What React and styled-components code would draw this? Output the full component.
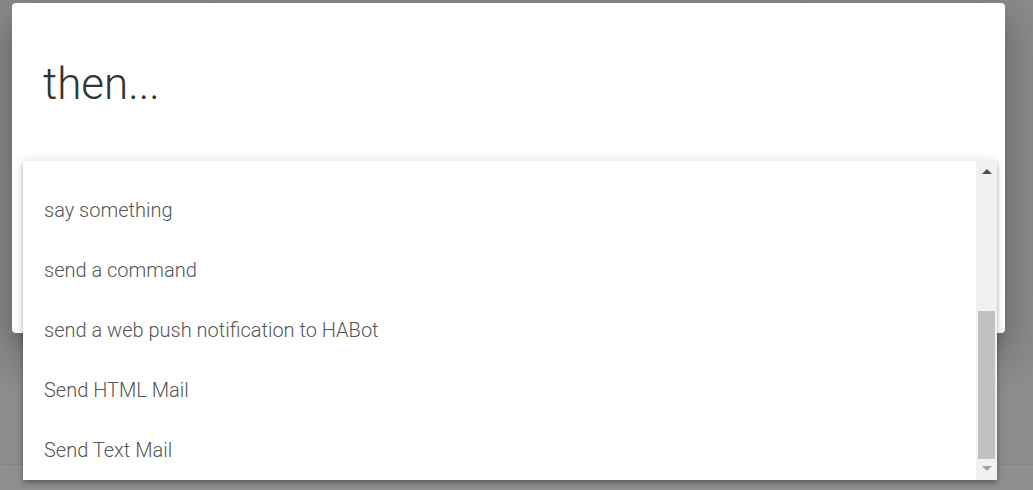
import React from 'react';
import styled, { createGlobalStyle } from 'styled-components';

const GlobalStyle = createGlobalStyle`
  html, body {
    margin: 0;
    padding: 0;
    background: #8c8c8c;
    font-family: Roboto, "Liberation Sans", sans-serif;
    overflow: hidden;
  }
`;

// list is scrolled to its end; only these rows are in view
const actions = [
  'say something',
  'send a command',
  'send a web push notification to HABot',
  'Send HTML Mail',
  'Send Text Mail',
];

const Page = styled.div`
  position: relative;
  width: 100vw;
  height: 490px;
  display: flex;
  flex-direction: column;
`;

const Backdrop = styled.div`
  flex: 1;
  display: grid;
  grid-template-columns: 216px 590px 1fr;
`;

const BackdropColumn = styled.div`
  border-right: ${(p) => (p.last ? 'none' : '1px solid #848484')};
`;

const Footer = styled.div`
  height: 25px;
  border-top: 1px solid #858585;
  background: #8f8f8f;
`;

const Dialog = styled.div`
  position: absolute;
  left: 12px;
  top: 3px;
  width: 993px;
  height: 330px;
  background: #fff;
  border-radius: 4px;
  box-shadow: 0 11px 15px -7px rgba(0, 0, 0, 0.2),
    0 24px 38px 3px rgba(0, 0, 0, 0.14), 0 9px 46px 8px rgba(0, 0, 0, 0.12);
  box-sizing: border-box;
  padding: 54px 31px 0;
`;

const Title = styled.h2`
  margin: 0;
  font-family: Roboto, "Liberation Sans", sans-serif;
  font-weight: 300;
  font-size: 44px;
  line-height: 54px;
  color: #333;
`;

const Menu = styled.div`
  position: absolute;
  left: 11px;
  top: 157px;
  width: 974px;
  height: 320px;
  display: flex;
  background: #fff;
  border-top: 1px solid #f0f0f0;
  box-sizing: border-box;
  box-shadow: 0 2px 4px -1px rgba(0, 0, 0, 0.2), 0 4px 5px 0 rgba(0, 0, 0, 0.14),
    0 1px 10px 0 rgba(0, 0, 0, 0.12);
`;

const List = styled.ul`
  flex: 1;
  margin: 0;
  padding: 19px 0 0;
  list-style: none;
  overflow: hidden;
`;

const Item = styled.li`
  height: 60px;
  display: flex;
  align-items: center;
  padding-left: 21px;
  font-family: Roboto, "Liberation Sans", sans-serif;
  font-weight: 300;
  font-size: 20px;
  color: #555;
`;

const Scrollbar = styled.div`
  width: 21px;
  display: flex;
  flex-direction: column;
  background: #f1f1f1;
`;

const ScrollButton = styled.div`
  height: 21px;
  display: flex;
  align-items: center;
  justify-content: center;
`;

const Arrow = styled.span`
  width: 0;
  height: 0;
  border-left: 5px solid transparent;
  border-right: 5px solid transparent;
  ${(p) =>
    p.down
      ? `border-top: 5px solid ${p.color}; margin-top: -2px;`
      : `border-bottom: 5px solid ${p.color};`}
`;

const Track = styled.div`
  flex: 1;
  display: flex;
  flex-direction: column;
  justify-content: flex-end;
  padding: 0 2px;
`;

const Thumb = styled.div`
  height: 148px;
  background: #c1c1c1;
`;

const App = () => (
  <Page>
    <GlobalStyle />
    <Backdrop>
      <BackdropColumn />
      <BackdropColumn />
      <BackdropColumn last />
    </Backdrop>
    <Footer />
    <Dialog>
      <Title>then...</Title>
      <Menu>
        <List>
          {actions.map((a) => (
            <Item key={a}>{a}</Item>
          ))}
        </List>
        <Scrollbar>
          <ScrollButton>
            <Arrow color="#505050" />
          </ScrollButton>
          <Track>
            <Thumb />
          </Track>
          <ScrollButton>
            <Arrow down color="#a3a3a3" />
          </ScrollButton>
        </Scrollbar>
      </Menu>
    </Dialog>
  </Page>
);

export default App;
